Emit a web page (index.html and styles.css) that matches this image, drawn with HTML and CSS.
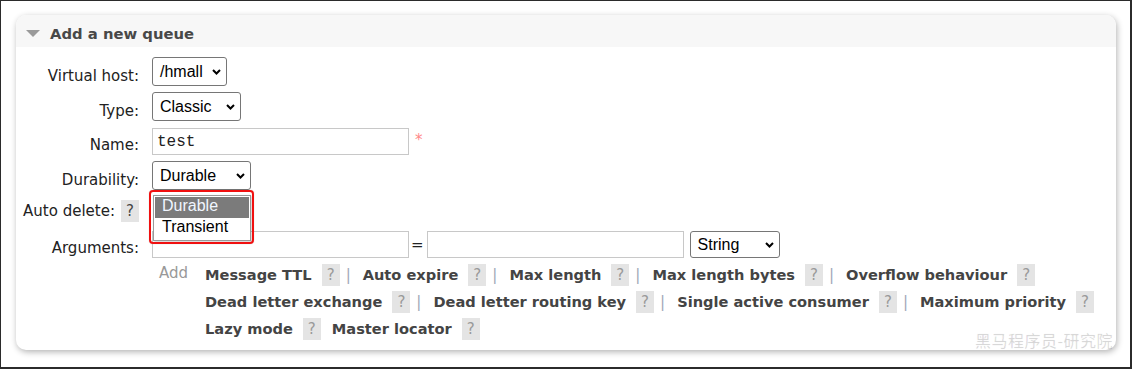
FILE: index.html
```html
<!DOCTYPE html>
<html lang="en">
<head>
    <meta charset="UTF-8">
    <meta name="viewport" content="width=device-width, initial-scale=1.0">
    <title>Add a new queue</title>
    <link rel="stylesheet" href="styles.css">
</head>
<body>
    <div id="frame">
        <div class="section">
            <div class="section-header">
                <svg class="toggle" width="14" height="7" viewBox="0 0 14 7"><polygon points="0,0 14,0 7,7" fill="#9a9a9a"/></svg>
                <h2>Add a new queue</h2>
            </div>
            <div class="form">
                <div class="label">Virtual host:</div>
                <div class="value">
                    <div class="select w-vhost"><span>/hmall</span><svg class="chev" width="9" height="6" viewBox="0 0 9 6"><path d="M1 1l3.5 3.5L8 1" fill="none" stroke="#000" stroke-width="2"/></svg></div>
                </div>

                <div class="label">Type:</div>
                <div class="value">
                    <div class="select w-type"><span>Classic</span><svg class="chev" width="9" height="6" viewBox="0 0 9 6"><path d="M1 1l3.5 3.5L8 1" fill="none" stroke="#000" stroke-width="2"/></svg></div>
                </div>

                <div class="label pushed">Name:</div>
                <div class="value pushed">
                    <div class="input mono">test</div>
                    <span class="required">*</span>
                </div>

                <div class="label">Durability:</div>
                <div class="value">
                    <div class="select w-durable"><span>Durable</span><svg class="chev" width="9" height="6" viewBox="0 0 9 6"><path d="M1 1l3.5 3.5L8 1" fill="none" stroke="#000" stroke-width="2"/></svg></div>
                    <ul class="dropdown">
                        <li class="selected">Durable</li>
                        <li>Transient</li>
                    </ul>
                    <div class="mark"></div>
                </div>

                <div class="label centered">Auto delete:<span class="help">?</span></div>
                <div class="value">
                    <!-- select sits under the open durability list -->
                    <div class="select-slot"></div>
                </div>

                <div class="label">Arguments:</div>
                <div class="value">
                    <div class="input"></div>
                    <span class="equals">=</span>
                    <div class="input"></div>
                    <div class="select w-string"><span>String</span><svg class="chev" width="9" height="6" viewBox="0 0 9 6"><path d="M1 1l3.5 3.5L8 1" fill="none" stroke="#000" stroke-width="2"/></svg></div>
                </div>

                <div class="label"></div>
                <div class="value add-block">
                    <span class="add">Add</span>
                    <div class="arg-lines">
                        <div class="arg-line">
                            <span class="link">Message TTL</span><span class="help">?</span><span class="sep">|</span>
                            <span class="link">Auto expire</span><span class="help">?</span><span class="sep">|</span>
                            <span class="link">Max length</span><span class="help">?</span><span class="sep">|</span>
                            <span class="link">Max length bytes</span><span class="help">?</span><span class="sep">|</span>
                            <span class="link">Overflow behaviour</span><span class="help">?</span>
                        </div>
                        <div class="arg-line">
                            <span class="link">Dead letter exchange</span><span class="help">?</span><span class="sep">|</span>
                            <span class="link">Dead letter routing key</span><span class="help">?</span><span class="sep">|</span>
                            <span class="link">Single active consumer</span><span class="help">?</span><span class="sep">|</span>
                            <span class="link">Maximum priority</span><span class="help">?</span>
                        </div>
                        <div class="arg-line">
                            <span class="link">Lazy mode</span><span class="help spaced">?</span>
                            <span class="link">Master locator</span><span class="help">?</span>
                        </div>
                    </div>
                </div>
            </div>
            <div class="watermark">黑马程序员-研究院</div>
        </div>
    </div>
</body>
</html>
```

FILE: styles.css
```css
* { box-sizing: border-box; }
body { margin: 0; font-family: "DejaVu Sans", Verdana, sans-serif; font-size: 15px; color: #222; background: #fff; }
#frame { width: 1132px; height: 369px; border: solid #2b2b2b; border-width: 1px 2px 2px 1px; padding: 14px 0 0 15px; }

.section { position: relative; width: 1100px; height: 335px; background: #fff; border-radius: 10px; box-shadow: 1px 2px 6px rgba(0, 0, 0, 0.3); }
.section-header { display: flex; align-items: center; height: 32px; padding: 4px 0 0 10px; background: #f7f7f7; border-radius: 10px 10px 0 0; }
.section-header h2 { margin: 0 0 0 10px; font-size: 14.8px; font-weight: bold; color: #484848; }

.form { display: grid; grid-template-columns: 123px auto; column-gap: 13px; row-gap: 6px; padding-top: 10px; }
.label { display: flex; justify-content: flex-end; align-items: flex-end; padding-bottom: 1px; line-height: 18px; white-space: nowrap; }
.label.centered { align-items: center; padding-bottom: 0; }
.value { position: relative; display: flex; align-items: center; }
.pushed { padding-top: 1px; }

.select { display: flex; align-items: center; justify-content: space-between; height: 29px; padding: 0 5px 0 7px; background: #fff; border: 1px solid #767676; border-radius: 3px; font-family: "Liberation Sans", Arial, sans-serif; font-size: 16px; color: #000; }
.select-slot { width: 60px; height: 29px; }
.w-vhost { width: 75px; }
.w-type { width: 89px; }
.w-durable { width: 99px; }
.w-string { width: 90px; height: 27px; margin-left: 6px; }

.input { width: 257px; height: 27px; padding: 0 4px; border: 1px solid #c8c8c8; display: flex; align-items: center; }
.mono { font-family: "Liberation Mono", "Courier New", monospace; font-size: 16px; color: #222; }
.required { align-self: flex-start; margin: 3px 0 0 6px; color: #f88; }
.equals { margin: 0 3px 0 2px; }

.dropdown { position: absolute; top: 34px; left: 1px; z-index: 2; width: 98px; height: 46px; margin: 0; padding: 1px; list-style: none; background: #fff; border: 1px solid #9a9a9a; box-shadow: 1px 1px 2px rgba(0, 0, 0, 0.2); font-family: "Liberation Sans", Arial, sans-serif; font-size: 16px; color: #000; }
.dropdown li { height: 21px; padding-left: 7px; line-height: 18px; }
.dropdown li.selected { background: #7b7b7b; color: #f0f6ff; }
.mark { position: absolute; top: 29px; left: -3px; z-index: 3; width: 105px; height: 54px; border: 2px solid #f01010; border-radius: 4px; box-shadow: 0 0 1px rgba(0, 0, 0, 0.3); }

.help { display: inline-flex; align-items: center; justify-content: center; width: 18px; height: 22px; margin-left: 10px; background: #e4e4e4; color: #999; font-size: 15px; font-weight: normal; }
.label .help { margin-left: 6px; color: #444; }
.help.spaced { margin-right: 11px; }

.add-block { align-items: flex-start; margin-top: -3px; }
.add { width: 46px; margin: 3px 0 0 7px; line-height: 18px; color: #999; }
.arg-lines { display: flex; flex-direction: column; }
.arg-line { display: flex; align-items: center; height: 27px; white-space: nowrap; }
.link { font-size: 14.6px; font-weight: bold; color: #444; }
.sep { margin: 0 12px 0 6px; color: #a0a8b8; }

.watermark { position: absolute; right: 3px; bottom: 0; font-family: "Noto Sans CJK SC", sans-serif; font-size: 16px; line-height: 20px; letter-spacing: 0.5px; color: rgba(0, 0, 0, 0.1); text-shadow: 0 0 1px rgba(0, 0, 0, 0.08); }
```
